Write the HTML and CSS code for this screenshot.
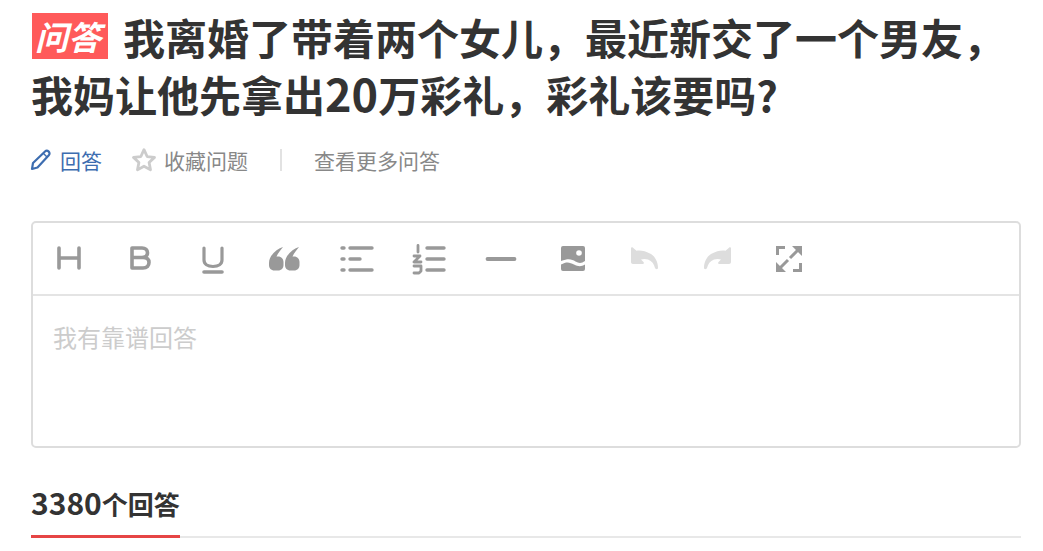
FILE: index.html
```html
<!doctype html>
<html lang="zh-CN">
<head>
    <meta charset="utf-8">
    <title>问答</title>
    <link rel="stylesheet" href="styles.css">
</head>
<body>
<div class="page">
    <h1 class="title"><span class="badge">问答</span>我离婚了带着两个女儿，最近新交了一个男友，我妈让他先拿出<span class="title-num">20</span>万彩礼，彩礼该要吗?</h1>

    <div class="actions">
        <a class="action action-answer">
            <svg class="action-icon" width="22" height="22" viewBox="0 0 22 22">
                <path d="M2 20l1-6L15 2.500c1-1 2.600-1 3.700.1s1.100 2.700.1 3.700L7.500 18.500z" fill="none" stroke="#3d6db0" stroke-width="2.200" stroke-linejoin="round"></path>
                <path d="M13.500 4.500l4 4" stroke="#3d6db0" stroke-width="1.500"></path>
            </svg>
            回答
        </a>
        <a class="action action-star">
            <svg class="action-icon" width="26" height="26" viewBox="0 0 24 24">
                <path d="M12 2.500l2.900 6.300 6.800.8-5 4.700 1.300 6.800-6-3.400-6 3.400 1.300-6.800-5-4.700 6.800-.8z" fill="none" stroke="#ccc" stroke-width="2.600" stroke-linejoin="round"></path>
            </svg>
            收藏问题
        </a>
        <span class="divider"></span>
        <a class="action">查看更多问答</a>
    </div>

    <div class="editor">
        <div class="toolbar">
            <svg class="tool" viewBox="0 0 30 30"><path d="M5 4v20M25 4v20M5 14h20" fill="none" stroke-width="3.600" stroke-linecap="round"></path></svg>
            <svg class="tool" viewBox="0 0 30 30"><path d="M6 4v20h11c4 0 6-2.500 6-5.500S21 13.500 17 13.500H6M6 4h10c3.500 0 5.500 2 5.500 4.800s-2 4.700-5.500 4.700" fill="none" stroke-width="3.600" stroke-linecap="round" stroke-linejoin="round"></path></svg>
            <svg class="tool" viewBox="0 0 30 30"><path d="M6 4v12c0 4 3.500 6.500 9 6.500s9-2.500 9-6.500V4" fill="none" stroke-width="3.200" stroke-linecap="round"></path><path d="M6 28h18" fill="none" stroke-width="3.600" stroke-linecap="round"></path></svg>
            <svg class="tool tool-fill" viewBox="0 0 30 30"><path d="M13 3C7 5-1 11-1 19v2c0 3 2 5.500 5.500 5.500h3.500c3.500 0 5.500-2.500 5.500-5.500v-3c0-3-2-5.500-5.500-5.500H6.500C8 9.500 10 6.500 13 3zM29 3c-6 2-14 8-14 16v2c0 3 2 5.500 5.500 5.500H24c3.500 0 5.500-2.500 5.500-5.500v-3c0-3-2-5.500-5.500-5.500h-1.500C24 9.500 26 6.500 29 3z"></path></svg>
            <svg class="tool" viewBox="0 0 30 30"><path d="M0 4h2M0 15h2M0 26h2M8 4h22M8 15h10M8 26h22" fill="none" stroke-width="3.400" stroke-linecap="round"></path></svg>
            <svg class="tool" viewBox="0 0 30 30"><path d="M13 4h17M13 15h17M13 26h17" fill="none" stroke-width="3.400" stroke-linecap="round"></path><path d="M4 1.500v6.500M0 12h6l-6 6h7M0 22h7v5l-2 2H0" fill="none" stroke-width="2.800" stroke-linecap="round" stroke-linejoin="round"></path></svg>
            <svg class="tool" viewBox="0 0 30 30"><path d="M1.500 15h27" fill="none" stroke-width="3.800" stroke-linecap="round"></path></svg>
            <svg class="tool tool-fill" viewBox="0 0 30 30"><path d="M5 2h20a2 2 0 0 1 2 2v13c-3.500 2.500-6 2.500-9.500.5S11 14 3 17V4a2 2 0 0 1 2-2zM3 20.500c6-3.500 9-2 13 0s7 2.500 11 0V25a2 2 0 0 1-2 2H5a2 2 0 0 1-2-2z"></path><circle cx="21" cy="9" r="2.800" fill="#fff"></circle></svg>
            <svg class="tool tool-fill tool-off" viewBox="0 0 30 30"><path d="M1 4.500c0-1 1-1.500 2-.8l3.500 3C10 6 15 6.500 21 10c4.500 3 7 8 7 14 0 1.500-2.500 1.500-3 0-1-4-3-7-7-8.500-2.500-.8-5-.8-7 0l2.500 2.500c.8 1 .2 2-1 2H3c-1.200 0-2-.8-2-2z"></path></svg>
            <svg class="tool tool-fill tool-off" viewBox="0 0 30 30"><path d="M29 4.500c0-1-1-1.500-2-.8l-3.500 3C20 6 15 6.500 9 10c-4.500 3-7 8-7 14 0 1.500 2.500 1.500 3 0 1-4 3-7 7-8.500 2.500-.8 5-.8 7 0l-2.500 2.500c-.8 1-.2 2 1 2H27c1.200 0 2-.8 2-2z"></path></svg>
            <svg class="tool" viewBox="0 0 30 30"><path d="M11 3.500H3.500V11M26.500 19v7.500H19" fill="none" stroke-width="3"></path><path d="M16 14l9-9M14 16l-9 9" fill="none" stroke-width="3"></path><path class="tool-head" d="M18 2h10v10zM12 28H2V18z"></path></svg>
        </div>
        <div class="editor-body">我有靠谱回答</div>
    </div>

    <div class="tabs">
        <div class="tab"><span class="tab-count">3380</span>个回答</div>
    </div>
</div>
</body>
</html>
```
FILE: styles.css
```css
body {
    margin: 0;
    background-color: #fff;
    font-family: "Noto Sans CJK SC", "Noto Sans", sans-serif;
    overflow: hidden;
}

.page {
    padding: 8px 22px 0 31px;
}

.title {
    margin: 0;
    font-size: 42px;
    line-height: 57px;
    font-weight: bold;
    color: #333;
}

.title-num {
    font-size: 45px;
    line-height: 40px;
}

.badge {
    display: inline-block;
    box-sizing: border-box;
    width: 76px;
    height: 46px;
    margin: 0 15px 0 1px;
    padding-right: 4px;
    background-color: #ff5a5a;
    color: #fff;
    font-size: 33px;
    line-height: 46px;
    font-style: italic;
    text-align: center;
    vertical-align: 5px;
}

.actions {
    display: flex;
    align-items: center;
    margin-top: 20px;
    height: 36px;
    font-size: 21px;
    color: #888;
}

.action {
    display: flex;
    align-items: center;
}

.action-answer {
    color: #3d6db0;
    margin-right: 30px;
}

.action-icon {
    margin: 0 8px 0 -1px;
}

.action-star .action-icon {
    margin-right: 7px;
}

.divider {
    width: 2px;
    height: 22px;
    margin: 0 32px;
    background-color: #e2e2e2;
}

.editor {
    margin-top: 43px;
    height: 227px;
    box-sizing: border-box;
    border: 2px solid #ddd;
    border-radius: 5px;
}

.toolbar {
    display: flex;
    gap: 42px;
    align-items: center;
    height: 71px;
    padding-left: 21px;
    border-bottom: 2px solid #e4e4e4;
}

.tool {
    width: 30px;
    height: 30px;
    stroke: #999;
    overflow: visible;
}

.tool-fill {
    fill: #999;
    stroke: none;
}

.tool-off {
    fill: #ddd;
}

.tool-head {
    fill: #999;
    stroke: none;
}

.editor-body {
    padding: 23px 20px;
    font-size: 24px;
    line-height: 36px;
    color: #ccc;
}

.tabs {
    display: flex;
    margin-top: 33px;
    border-bottom: 2px solid #e8e8e8;
}

.tab {
    height: 54px;
    margin-bottom: -2px;
    border-bottom: 3px solid #e64545;
    font-size: 26px;
    line-height: 42px;
    font-weight: bold;
    color: #333;
}

.tab-count {
    font-size: 30px;
}
```
